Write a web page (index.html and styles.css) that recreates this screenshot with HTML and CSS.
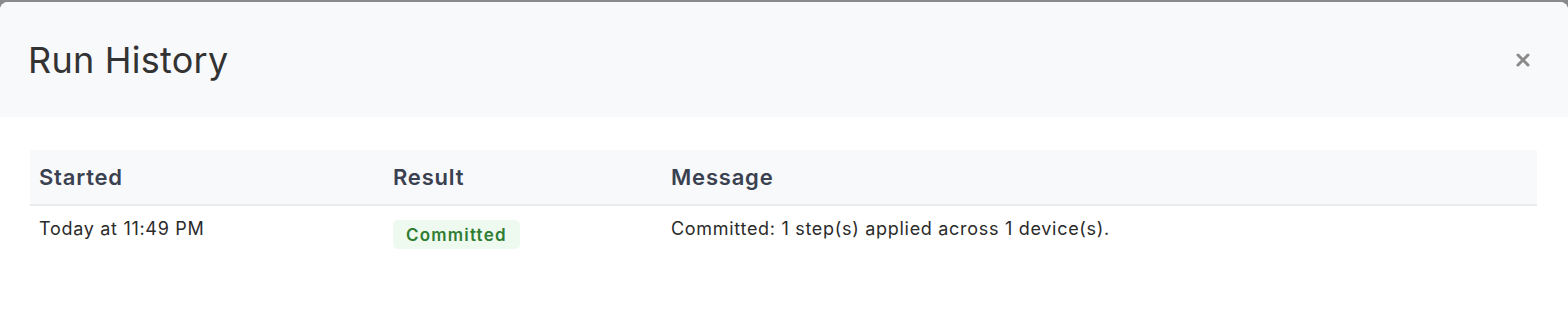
FILE: index.html
```html
<!DOCTYPE html>
<html lang="en">

<head>
    <meta charset="UTF-8">
    <meta name="viewport" content="width=device-width, initial-scale=1.0">
    <title>Run History</title>
    <link rel="stylesheet" href="styles.css">
</head>

<body>
    <div class="modal">
        <div class="modal-header">
            <h2>Run History</h2>
            <button class="close-btn" aria-label="Close">
                <svg width="14" height="14" viewBox="0 0 14 14">
                    <path d="M2 2 L12 12 M12 2 L2 12" stroke="#8a8a8a" stroke-width="3" stroke-linecap="round" />
                </svg>
            </button>
        </div>
        <div class="modal-body">
            <table class="history-table">
                <thead>
                    <tr>
                        <th class="col-started">Started</th>
                        <th class="col-result">Result</th>
                        <th>Message</th>
                    </tr>
                </thead>
                <tbody>
                    <tr>
                        <td>Today at 11:49 PM</td>
                        <td><span class="badge badge-success">Committed</span></td>
                        <td>Committed: 1 step(s) applied across 1 device(s).</td>
                    </tr>
                </tbody>
            </table>
        </div>
    </div>
</body>

</html>
```

FILE: styles.css
```css
/* Run history modal */
html,
body {
    height: 100%;
}

body {
    font-family: Inter, "Noto Sans", Arial, sans-serif;
    background-color: #8a8a8a;
    margin: 0;
    padding: 2px 0 0 0;
    box-sizing: border-box;
    overflow: hidden;
}

.modal {
    background-color: #fff;
    border-radius: 8px 8px 0 0;
    height: 100%;
    overflow: hidden;
}

.modal-header {
    background-color: #f8f9fb;
    height: 115px;
    display: flex;
    align-items: center;
    justify-content: space-between;
    padding: 0 28px;
}

.modal-header h2 {
    margin: 0;
    font-size: 36px;
    font-weight: 400;
    color: #333;
    letter-spacing: 0.25px;
}

.close-btn {
    background: none;
    border: none;
    padding: 0;
    cursor: pointer;
    display: flex;
    margin-right: 10px;
    margin-top: 1px;
}

.modal-body {
    padding: 33px 31px 30px 30px;
}

.history-table {
    width: 100%;
    border-collapse: collapse;
}

.history-table th {
    background-color: #f8f9fb;
    text-align: left;
    font-size: 22px;
    font-weight: 600;
    color: #3a4150;
    letter-spacing: 0.8px;
    padding: 13px 9px 13px 9px;
    height: 28px;
    border-bottom: 2px solid #e9ebee;
}

.col-started {
    width: 336px;
}

.col-result {
    width: 260px;
}

.history-table td {
    font-size: 18px;
    color: #2b2b2b;
    letter-spacing: 0.7px;
    vertical-align: top;
    padding: 12px 9px;
}

.badge {
    display: inline-block;
    padding: 5px 13px 4px 13px;
    border-radius: 5px;
    font-size: 17px;
    font-weight: 600;
    letter-spacing: 1.2px;
    margin-top: 2px;
}

.badge-success {
    background-color: #eefaf0;
    color: #2e7d32;
}
```
